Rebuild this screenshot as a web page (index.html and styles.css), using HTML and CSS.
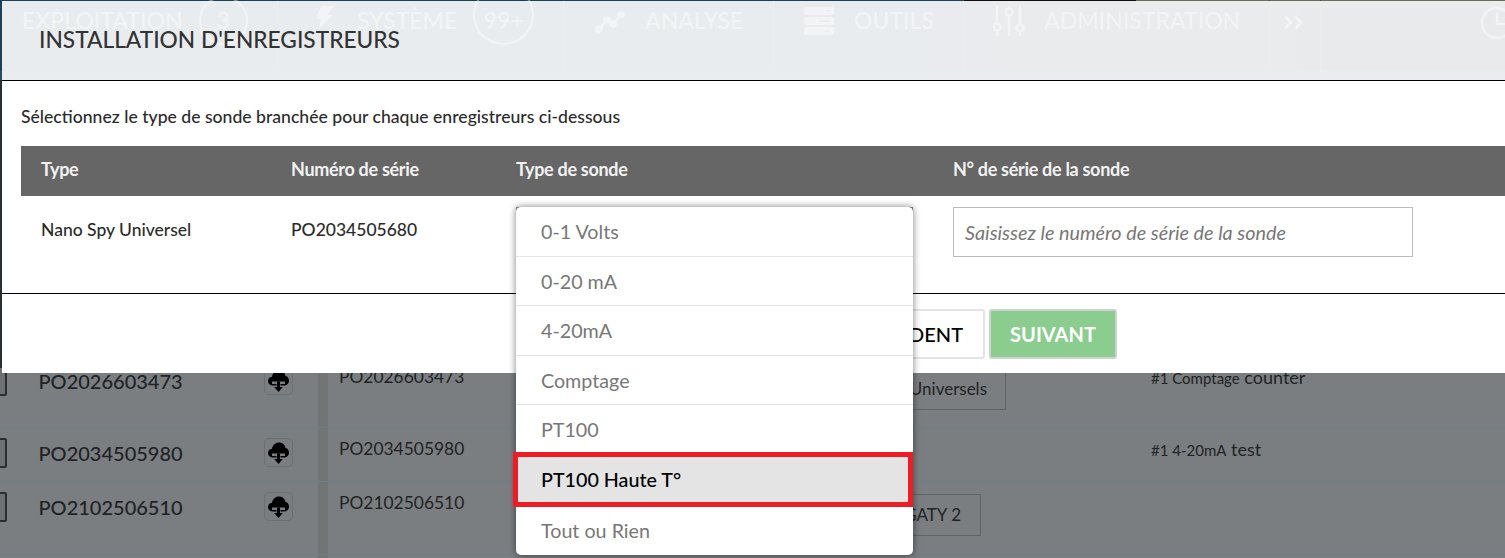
FILE: index.html
```html
<!DOCTYPE html>
<html lang="fr">
<head>
<meta charset="utf-8">
<title>Installation d'enregistreurs</title>
<link rel="stylesheet" href="styles.css">
</head>
<body>
<div class="page">
  <div class="app">
    <nav class="nav">
      <div class="nav-item i1"><span>EXPLOITATION</span><span class="badge">3</span></div>
      <div class="nav-item i2"><svg class="ni bolt" width="21" height="24" viewBox="0 0 21 24"><path d="M8 0h13l-7 9h6L5 24l4-11H3z"/></svg><span>SYSTÈME</span><span class="badge wide">99+</span></div>
      <div class="nav-item i3"><svg class="ni" width="30" height="22" viewBox="0 0 30 22"><circle cx="4" cy="18" r="3.800"/><circle cx="12" cy="9" r="3.800"/><circle cx="18" cy="13" r="3.800"/><circle cx="26" cy="4" r="3.800"/><path class="link" d="M4 18l8-9 6 4 8-9"/></svg><span>ANALYSE</span></div>
      <div class="nav-item i4"><svg class="ni srv" width="30" height="28" viewBox="0 0 30 28"><rect width="30" height="8" rx="2"/><rect y="10" width="30" height="8" rx="2"/><rect y="20" width="30" height="8" rx="2"/><path class="notch" d="M22 4h5M15 14h12M20 24h7"/></svg><span>OUTILS</span></div>
      <div class="nav-item i5"><svg class="ni line" width="32" height="30" viewBox="0 0 32 30"><path d="M4 0v17M4 25v5M16 0v2M16 10v20M27 0v19M27 26v4"/><circle cx="4" cy="21" r="3.500"/><circle cx="16" cy="6" r="3.500"/><circle cx="27" cy="22" r="3.500"/></svg><span>ADMINISTRATION</span></div>
      <div class="nav-item i6"><svg class="ni line" width="21" height="15" viewBox="0 0 21 15"><path d="M2 1l6 6.500-6 6.500M12 1l6 6.500-6 6.500" stroke-width="3"/></svg></div>
      <div class="nav-item i7"><svg class="ni line" width="32" height="32" viewBox="0 0 32 32"><circle cx="16" cy="16" r="15"/><path d="M16 6v11h9"/></svg></div>
    </nav>
    <main class="rows">
      <div class="row first-row">
        <span class="check"></span>
        <span class="serial">PO2026603473</span>
        <button class="dl"><svg width="21" height="22" viewBox="0 0 21 22"><use href="#cloud"/></svg></button>
        <span class="serial-small">PO2026603473</span>
        <span class="chip">Capteurs Universels</span>
        <span class="sensor"><small>#1 Comptage</small> counter</span>
      </div>
      <div class="row">
        <span class="check"></span>
        <span class="serial">PO2034505980</span>
        <button class="dl"><svg width="21" height="22" viewBox="0 0 21 22"><use href="#cloud"/></svg></button>
        <span class="serial-small">PO2034505980</span>
        <span class="sensor"><small>#1 4-20mA</small> test</span>
      </div>
      <div class="row last-row">
        <span class="check"></span>
        <span class="serial">PO2102506510</span>
        <button class="dl"><svg width="21" height="22" viewBox="0 0 21 22"><use href="#cloud"/></svg></button>
        <span class="serial-small">PO2102506510</span>
        <span class="chip chip-b">GATY 2</span>
      </div>
    </main>
  </div>

  <svg class="defs" width="0" height="0"><defs><g id="cloud"><path d="M5 15.500C2 15.500 0 13.600 0 11c0-2.400 1.700-4 4-4.300C4.700 3 7.500 0.500 11 0.500c3.300 0 5.800 2.200 6.400 5.200 2.200 0.500 3.600 2.500 3.600 4.800 0 2.800-2 5-5 5z" fill="#000"/><path d="M4 11.500h13v2.500H12.500v3H8.500v-3H4z" fill="#7a7e80"/><path d="M9 11.500h3v5.500h2.800L10.500 22 6.200 17H9z" fill="#000"/></g></defs></svg>

  <section class="modal">
    <header class="modal-head"><h1>INSTALLATION D'ENREGISTREURS</h1></header>
    <div class="modal-body">
      <p class="intro">Sélectionnez le type de sonde branchée pour chaque enregistreurs ci-dessous</p>
      <div class="t-row t-head">
        <span>Type</span><span>Numéro de série</span><span>Type de sonde</span><span>N° de série de la sonde</span>
      </div>
      <div class="t-row t-data">
        <span>Nano Spy Universel</span>
        <span>PO2034505680</span>
        <span class="select"></span>
        <span class="input">Saisissez le numéro de série de la sonde</span>
      </div>
    </div>
    <footer class="modal-foot">
      <button class="btn btn-prev">PRÉCÉDENT</button>
      <button class="btn btn-next">SUIVANT</button>
    </footer>
  </section>

  <ul class="dropdown">
    <li>0-1 Volts</li>
    <li>0-20 mA</li>
    <li>4-20mA</li>
    <li>Comptage</li>
    <li>PT100</li>
    <li class="active">PT100 Haute T°</li>
    <li>Tout ou Rien</li>
  </ul>
</div>
</body>
</html>
```

FILE: styles.css
```css
* { box-sizing: border-box; }
html, body { margin: 0; padding: 0; }
body { font-family: Lato, "Liberation Sans", sans-serif; background: #7a7e80; }

.page { position: relative; width: 1505px; height: 558px; overflow: hidden; background: #7a7e80; }

/* Application behind the dialog */
.nav {
  display: grid;
  grid-template-columns: 278px 286px 210px 190px 306px 51px 1fr;
  grid-template-rows: 71px;
  height: 80px;
  background:
    linear-gradient(to right, #1d4059 963px, #111 963px, #111 1136px, #6b6b60 1136px) 0 0 / 100% 1px no-repeat,
    linear-gradient(#3a3f40, #3a3f40) 1136px 0 / 369px 8px no-repeat,
    linear-gradient(to right, #1d4059, #1d4059 760px, #222c38) 0 0 / 100% 71px no-repeat,
    #2a4a60;
  color: #7f8d95;
  font-size: 23px;
  font-weight: 500;
  line-height: 19px;
}
.nav-item { display: flex; align-items: flex-start; padding-top: 11px; border-right: 1px solid #2f5068; white-space: nowrap; }
.i1 { padding-left: 22px; gap: 16px; }
.i2 { padding-left: 35px; gap: 23px; }
.i2 .badge { margin-left: -7px; }
.i3 { padding-left: 31px; gap: 20px; }
.i4 { padding-left: 30px; gap: 20px; }
.i5 { padding-left: 29px; gap: 19px; }
.i6 { padding-left: 13px; }
.i7 { padding-left: 160px; border-right: 0; }
.badge { width: 49px; height: 49px; margin-top: -15px; border: 2px solid #7f8d95; border-radius: 50%; display: flex; align-items: center; justify-content: center; flex: none; }
.badge.wide { width: 61px; height: 60px; margin-top: -26px; padding-top: 11px; }
.ni { fill: #7f8d95; flex: none; }
.bolt { margin-top: -5px; }
.srv { margin-top: -4px; }
.i5 .ni { margin-top: -5px; }
.i6 .ni { margin-top: 4px; }
.i7 .ni { margin-top: -4px; }
.link { fill: none; stroke: #7f8d95; stroke-width: 2.500; }
.notch { fill: none; stroke: #1d4059; stroke-width: 1.500; }
.ni.line { fill: none; stroke: #7f8d95; stroke-width: 2.500; }

.rows {
  height: 478px;
  padding-top: 276px;
  font-size: 20px;
  color: #1f2325;
  background:
    linear-gradient(#2a2f33, #2a2f33) 0 0 / 2px 293px no-repeat,
    linear-gradient(to right, transparent 318px, #717576 318px, #717576 328px, transparent 328px);
}
.row {
  display: grid;
  grid-template-columns: 38.500px 225.500px 75px 180px 487px 145px 1fr;
  height: 54px;
  padding-top: 10px;
  border-bottom: 1px solid #6c8087;
  align-items: start;
}
.first-row { height: 72px; }
.last-row { height: 73px; }
.check { width: 28px; height: 30px; margin-left: -21px; border: 2px solid #2b2e30; border-radius: 2px; background: #6c7072; }
.serial { line-height: 30px; font-weight: 500; }
.dl { width: 29px; height: 29px; padding: 3px 0 0; background: transparent; border: 1px solid #6c7072; border-radius: 5px; display: flex; justify-content: center; }
.serial-small { font-size: 17.400px; line-height: 22px; white-space: nowrap; }
.chip { grid-column: 5; justify-self: end; padding: 0 18px; height: 40px; line-height: 35px; font-size: 17px; border: 1px solid #5f6365; white-space: nowrap; margin-top: 4px; }
.chip-b { margin-right: 25px; padding-right: 19px; margin-top: 2px; height: 42px; line-height: 40px; }
.sensor { grid-column: 7; font-size: 18px; line-height: 20px; margin-top: 1px; white-space: nowrap; }
.sensor small { font-size: 15px; }
.defs { position: absolute; }

/* Dialog */
.modal { position: absolute; left: 2px; top: 1px; right: 0; height: 372px; display: flex; flex-direction: column; color: #2b2b2b; }
.modal-head { height: 80px; padding: 29px 0 0 37px; background: rgba(255, 255, 255, .9); border-bottom: 1px solid #000; }
.modal-head h1 { margin: 0; font-size: 22.700px; line-height: 20px; font-weight: 500; color: #333; }
.modal-body { height: 213px; padding: 0 0 0 19px; background: #fff; border-bottom: 1px solid #000; }
.intro { margin: 0; padding-top: 24px; height: 65px; font-size: 17.600px; line-height: 24px; font-weight: 500; }
.t-row { display: grid; grid-template-columns: 250px 225px 437px 460px; padding-left: 20px; }
.t-head { height: 50px; padding-bottom: 4px; align-items: center; background: #666; color: #f2f2f2; font-size: 18px; font-weight: 700; letter-spacing: -.3px; }
.t-data { padding-top: 11px; font-size: 17.500px; font-weight: 500; align-items: start; }
.t-data > span:nth-child(-n+2) { line-height: 46px; }
.select { height: 50px; width: 397px; border: 1px solid #8c8c8c; }
.input { display: flex; align-items: center; height: 50px; padding-left: 11px; border: 1px solid #bbb; font-size: 19.800px; font-style: italic; color: #777; font-weight: 400; white-space: nowrap; }
.modal-foot { height: 79px; padding: 15px 388px 0 0; background: #fff; display: flex; justify-content: flex-end; align-items: flex-start; gap: 4px; }
.btn { height: 50px; font: inherit; font-size: 20px; border-radius: 3px; }
.btn-prev { width: 150px; background: #fff; border: 2px solid #e4e4e4; color: #000; font-weight: 500; padding: 0 20px 0 0; text-align: right; }
.btn-next { width: 128px; background: #8bcc8f; border: 2px solid #cfd3cf; color: #fff; font-weight: 700; }

/* Open select list */
.dropdown { position: absolute; left: 516px; top: 207px; width: 397px; height: 348px; margin: 0; padding: 0; list-style: none; display: flex; flex-direction: column; background: #fff; border-radius: 5px; box-shadow: 0 0 6px 1px rgba(0, 0, 0, .4); color: #777; font-size: 19.700px; }
.dropdown li { height: 49.500px; flex: none; display: flex; align-items: center; padding: 1px 0 0 25px; border-bottom: 1px solid #e5e5e5; position: relative; }
.dropdown li:first-child { padding-top: 0; }
.dropdown li:last-child { border-bottom: 0; flex: 1; }
.dropdown .active { background: #e4e4e4; color: #000; font-weight: 500; border-bottom: 0; }
.dropdown .active::after { content: ""; position: absolute; left: -3px; right: 0; top: -3px; bottom: -3px; border: 5px solid #ee1c25; }
```
